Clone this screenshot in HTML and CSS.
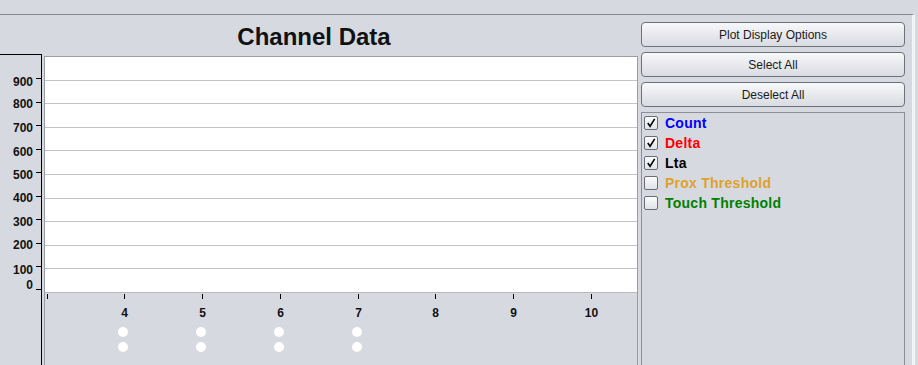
FILE: index.html
```html
<!DOCTYPE html>
<html lang="en">
<head>
    <meta charset="UTF-8">
    <meta name="viewport" content="width=device-width, initial-scale=1.0">
    <title>Channel Data</title>
    <link rel="stylesheet" href="styles.css">
</head>
<body>
    <div class="frame">
        <section class="chart">
            <h1 class="chart-title">Channel Data</h1>
            <div class="chart-body">
                <div class="y-axis">
                    <!-- labels and ticks sit on the value scale -->
                    <span class="y-label" style="top: 20px">900</span>
                    <span class="y-label" style="top: 42px">800</span>
                    <span class="y-label" style="top: 66px">700</span>
                    <span class="y-label" style="top: 90px">600</span>
                    <span class="y-label" style="top: 113px">500</span>
                    <span class="y-label" style="top: 136px">400</span>
                    <span class="y-label" style="top: 160px">300</span>
                    <span class="y-label" style="top: 183px">200</span>
                    <span class="y-label" style="top: 208px">100</span>
                    <span class="y-label" style="top: 223px">0</span>
                    <i class="y-tick" style="top: 23px"></i>
                    <i class="y-tick" style="top: 47px"></i>
                    <i class="y-tick" style="top: 70px"></i>
                    <i class="y-tick" style="top: 94px"></i>
                    <i class="y-tick" style="top: 117px"></i>
                    <i class="y-tick" style="top: 141px"></i>
                    <i class="y-tick" style="top: 164px"></i>
                    <i class="y-tick" style="top: 188px"></i>
                    <i class="y-tick" style="top: 211px"></i>
                    <i class="y-tick" style="top: 234px"></i>
                </div>
                <div class="plot">
                    <div class="plot-area">
                        <div class="grid-row"></div>
                        <div class="grid-row"></div>
                        <div class="grid-row"></div>
                        <div class="grid-row"></div>
                        <div class="grid-row"></div>
                        <div class="grid-row"></div>
                        <div class="grid-row"></div>
                        <div class="grid-row"></div>
                        <div class="grid-row"></div>
                        <div class="grid-row"></div>
                    </div>
                    <div class="x-axis">
                        <div class="x-col" style="left: 2px"><i class="x-tick"></i><span class="x-label"></span></div>
                        <div class="x-col" style="left: 79px"><i class="x-tick"></i><span class="x-label">4</span><b class="dot"></b><b class="dot"></b></div>
                        <div class="x-col" style="left: 157px"><i class="x-tick"></i><span class="x-label">5</span><b class="dot"></b><b class="dot"></b></div>
                        <div class="x-col" style="left: 235px"><i class="x-tick"></i><span class="x-label">6</span><b class="dot"></b><b class="dot"></b></div>
                        <div class="x-col" style="left: 313px"><i class="x-tick"></i><span class="x-label">7</span><b class="dot"></b><b class="dot"></b></div>
                        <div class="x-col" style="left: 390px"><i class="x-tick"></i><span class="x-label">8</span></div>
                        <div class="x-col" style="left: 468px"><i class="x-tick"></i><span class="x-label">9</span></div>
                        <div class="x-col" style="left: 546px"><i class="x-tick"></i><span class="x-label">10</span></div>
                    </div>
                </div>
            </div>
        </section>
        <aside class="options">
            <button class="opt-btn">Plot Display Options</button>
            <button class="opt-btn">Select All</button>
            <button class="opt-btn">Deselect All</button>
            <div class="series-list">
                <label class="series count"><span class="box checked"><svg viewBox="0 0 13 13"><path d="M3 6.5 L5.5 10 L10.5 2"/></svg></span>Count</label>
                <label class="series delta"><span class="box checked"><svg viewBox="0 0 13 13"><path d="M3 6.5 L5.5 10 L10.5 2"/></svg></span>Delta</label>
                <label class="series lta"><span class="box checked"><svg viewBox="0 0 13 13"><path d="M3 6.5 L5.5 10 L10.5 2"/></svg></span>Lta</label>
                <label class="series prox"><span class="box"></span>Prox Threshold</label>
                <label class="series touch"><span class="box"></span>Touch Threshold</label>
            </div>
        </aside>
    </div>
</body>
</html>
```

FILE: styles.css
```css
* {
  padding: 0;
  margin: 0;
  box-sizing: border-box;
}
html {
  font-family: 'Liberation Sans', Arial, sans-serif;
  font-size: 12px;
  color: #111;
  background-color: #d6d9e0;
}
body {
  background-color: #d6d9e0;
  height: 365px;
  overflow: hidden;
}
.frame {
  margin-top: 14px;
  width: 915px;
  height: 351px;
  border-top: 1px solid #86898f;
  border-right: 3px solid #f3f4f6;
  display: flex;
}
/* chart side */
.chart {
  width: 641px;
  display: flex;
  flex-direction: column;
}
.chart-title {
  height: 39px;
  padding-right: 13px;
  font-size: 24px;
  font-weight: bold;
  line-height: 44px;
  text-align: center;
  color: #111;
}
.chart-body {
  flex: 1;
  display: flex;
}
.y-axis {
  position: relative;
  width: 42px;
  border-top: 1px solid #000;
  border-right: 1px solid #000;
}
.y-label {
  position: absolute;
  right: 8px;
  font-size: 12px;
  font-weight: bold;
  line-height: 14px;
}
.y-tick {
  position: absolute;
  right: 0;
  width: 5px;
  height: 1px;
  background-color: #000;
}
.plot {
  margin-left: 2px;
  margin-top: 2px;
  width: 594px;
  display: flex;
  flex-direction: column;
  border: 1px solid #9a9da3;
  border-bottom: none;
}
.plot-area {
  height: 236px;
  background-color: #fff;
  border-bottom: 1px solid #b9b9b9;
  display: flex;
  flex-direction: column;
}
.grid-row {
  flex: 1;
}
.grid-row + .grid-row {
  border-top: 1px solid #c3c3c3;
}
.x-axis {
  position: relative;
  flex: 1;
}
.x-col {
  position: absolute;
  top: 0;
  width: 1px;
  display: flex;
  flex-direction: column;
  align-items: center;
}
.x-tick {
  display: block;
  width: 1px;
  height: 5px;
  margin-top: 1px;
  background-color: #000;
}
.x-label {
  height: 14px;
  margin-top: 7px;
  font-size: 12px;
  font-weight: bold;
  line-height: 14px;
  white-space: nowrap;
}
.dot {
  flex: none;
  width: 10px;
  height: 10px;
  margin-left: -4px;
  border-radius: 50%;
  background-color: #fff;
}
.x-label + .dot {
  margin-top: 7px;
}
.dot + .dot {
  margin-top: 5px;
}
/* options side */
.options {
  width: 264px;
  padding-top: 7px;
  display: flex;
  flex-direction: column;
  gap: 5px;
}
.opt-btn {
  height: 25px;
  font-family: 'Liberation Sans', Arial, sans-serif;
  font-size: 12px;
  color: #1a1a1a;
  border: 1px solid #6e7177;
  border-radius: 4px;
  background: linear-gradient(#f7f8fa, #e6e8ec 55%, #d9dce1);
}
.series-list {
  flex: 1;
  border: 1px solid #8c8f96;
  border-bottom: none;
  padding: 3px 0 0 2px;
}
.series {
  height: 20px;
  display: flex;
  align-items: flex-start;
  gap: 7px;
  font-size: 14px;
  font-weight: bold;
  letter-spacing: 0.25px;
  line-height: 14px;
}
.box {
  width: 14px;
  height: 14px;
  margin-top: 0;
  border: 1px solid #6a6d73;
  border-radius: 2px;
  background: linear-gradient(#fbfbfc, #dfe2e7);
}
.box svg {
  display: block;
  width: 12px;
  height: 12px;
  fill: none;
  stroke: #000;
  stroke-width: 1.7;
}
.count {
  color: #0000ff;
}
.delta {
  color: #ff0000;
}
.lta {
  color: #000;
}
.prox {
  color: #dea22c;
}
.touch {
  color: #008000;
}
```
